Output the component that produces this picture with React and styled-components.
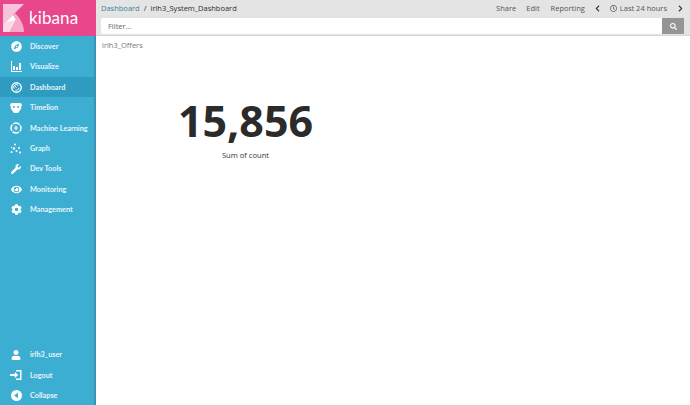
import React from "react";
import styled, { createGlobalStyle } from "styled-components";
import { FaCompass, FaWrench, FaEye, FaCog, FaUser, FaSearch, FaChevronLeft, FaChevronRight } from "react-icons/fa";
import { FaRegClock } from "react-icons/fa";

const Global = createGlobalStyle`
  html, body { margin: 0; padding: 0; width: 690px; height: 405px; overflow: hidden; background: #fff; }
  * { box-sizing: border-box; }
  body { font-family: "Open Sans", "Liberation Sans", sans-serif; -webkit-font-smoothing: antialiased; }
`;

const Page = styled.div`
  display: flex;
  width: 690px;
  height: 405px;
`;
const Sidebar = styled.aside`
  width: 96px;
  flex: none;
  display: flex;
  flex-direction: column;
  background: #3caed2;
  border-right: 2px solid #3a93b4;
`;
const Brand = styled.div`
  height: 36px;
  flex: none;
  display: flex;
  align-items: center;
  gap: 5px;
  padding-left: 3px;
  margin-right: -2px;
  background: #e8488b;
`;
const BrandName = styled.span`
  font-family: Lato, sans-serif;
  font-size: 17px;
  letter-spacing: 0.1px;
  color: #fff;
  line-height: 1;
  margin-top: -1px;
`;
const Nav = styled.nav`
  display: flex;
  flex-direction: column;
`;
const NavFoot = styled(Nav)`
  margin-top: auto;
  margin-bottom: -0.4px;
`;
const Item = styled.div`
  height: 20.4px;
  display: flex;
  align-items: center;
  font-family: Lato, sans-serif;
  font-size: 7.3px;
  font-weight: 700;
  color: #e6f5fa;
  padding-top: 0.6px;
  background: ${(p) => (p.$active ? "#2f9bc0" : "transparent")};
`;
const IconSlot = styled.span`
  width: 30px;
  padding-left: 2px;
  flex: none;
  display: flex;
  justify-content: center;
  color: #fff;
`;
const Main = styled.main`
  flex: 1;
  min-width: 0;
  display: flex;
  flex-direction: column;
`;
const TopBar = styled.header`
  height: 36px;
  flex: none;
  background: #e4e4e4;
  padding: 0 6px 0 5px;
  display: flex;
  flex-direction: column;
  border-bottom: 1px solid #d6d6d6;
`;
const TopRow = styled.div`
  height: 16px;
  margin: 0 0 2px 0;
  flex: none;
  display: flex;
  align-items: center;
  justify-content: space-between;
  font-size: 7.5px;
  color: #2d2d2d;
`;
const Crumbs = styled.div`
  display: flex;
  gap: 4px;
`;
const CrumbLink = styled.span`
  color: #3a7f9f;
`;
const Menu = styled.div`
  display: flex;
  align-items: center;
  color: #555;
`;
const MenuItem = styled.span`
  margin-left: ${(p) => p.$gap || 0}px;
  display: inline-flex;
  align-items: center;
  gap: 3px;
  color: ${(p) => (p.$dark ? "#333" : "#555")};
`;
const FilterRow = styled.div`
  display: flex;
  height: 16px;
`;
const FilterInput = styled.div`
  flex: 1;
  background: #fff;
  border-radius: 2px 0 0 2px;
  font-size: 7.5px;
  color: #666;
  padding-left: 7px;
  line-height: 16px;
`;
const SearchButton = styled.div`
  width: 22px;
  background: #959595;
  color: #fff;
  display: flex;
  align-items: center;
  justify-content: center;
`;
const PanelTitle = styled.div`
  font-size: 7.5px;
  color: #777;
  padding: 4px 0 0 6px;
  line-height: 11px;
`;
const Metric = styled.div`
  width: 299px;
  margin-top: 45px;
  display: flex;
  flex-direction: column;
  align-items: center;
`;
const MetricValue = styled.div`
  font-size: 43px;
  font-weight: 700;
  line-height: 50px;
  color: #2b2b2b;
`;
const MetricLabel = styled.div`
  font-size: 7.6px;
  color: #333;
  line-height: 12px;
  margin-top: 3px;
`;

const KibanaLogo = () => (
  <svg width="21" height="28" viewBox="0 0 21 28">
    <path d="M0 0H21L0 21Z" fill="#f8c3da" />
    <path d="M0 21 10 11 13 16 7 28H0Z" fill="#fbd9e8" />
    <path d="M10 11 12 9C17 14 21 21 21 28H7L13 16Z" fill="#f5a9cb" />
    <path d="M0 21 10 11 13 16 4 18Z" fill="#fff" />
  </svg>
);
const VisualizeIcon = () => (
  <svg width="11" height="11" viewBox="0 0 11 11" fill="#fff">
    <path d="M0 0h1v10h10v1H0z" />
    <path d="M2 5h2v4H2zM5 6h2v3H5zM8 2h2v7H8z" />
  </svg>
);
const DashboardIcon = () => (
  <svg width="11" height="11" viewBox="0 0 11 11" fill="none" stroke="#fff">
    <circle cx="5.500" cy="5.500" r="4.700" strokeWidth="1.400" />
    <path d="M5.500 5.500 3 3.500M3 6.500A2.600 2.600 0 0 1 7.500 3.800M4.500 8A2.600 2.600 0 0 0 8 6" strokeWidth="1" />
  </svg>
);
const TimelionIcon = () => (
  <svg width="12" height="10" viewBox="0 0 12 10" fill="#fff">
    <path d="M0 1 2 0h8l2 1-1 5-3 4H4L1 6z" />
    <circle cx="4" cy="4" r="1" fill="#3caed2" />
    <circle cx="8" cy="4" r="1" fill="#3caed2" />
  </svg>
);
const MlIcon = () => (
  <svg width="12" height="12" viewBox="0 0 12 12" fill="none" stroke="#fff" strokeWidth="1.500">
    <circle cx="6" cy="6" r="5" strokeDasharray="6.850 1" strokeDashoffset="3.400" />
    <path d="M6 3.500v5M4 6h4" strokeWidth="1" />
  </svg>
);
const GraphIcon = () => (
  <svg width="12" height="11" viewBox="0 0 12 11" fill="#fff">
    <circle cx="5" cy="1.500" r="1" />
    <circle cx="9" cy="5" r="1" />
    <circle cx="4" cy="5.500" r="1.200" />
    <circle cx="1.500" cy="9" r="1" />
    <circle cx="6.500" cy="8" r="1" />
    <circle cx="10" cy="9.500" r="1" />
    <circle cx="1.500" cy="4.500" r=".7" />
  </svg>
);
const CollapseIcon = () => (
  <svg width="11" height="11" viewBox="0 0 11 11">
    <circle cx="5.500" cy="5.500" r="5.500" fill="#fff" />
    <path d="M3 5.500 7 2.800V8.200Z" fill="#3caed2" />
  </svg>
);
const LogoutIcon = () => (
  <svg width="12" height="10" viewBox="0 0 12 10" fill="none" stroke="#fff">
    <path d="M6 .7h4.800v8.600H6" strokeWidth="1.400" />
    <path d="M0 5h6" strokeWidth="2" />
    <path d="M5 2.500 8 5 5 7.500Z" fill="#fff" strokeWidth=".5" />
  </svg>
);

const topItems = [
  ["Discover", <FaCompass size={11} />],
  ["Visualize", <VisualizeIcon />],
  ["Dashboard", <DashboardIcon />, true],
  ["Timelion", <TimelionIcon />],
  ["Machine Learning", <MlIcon />],
  ["Graph", <GraphIcon />],
  ["Dev Tools", <FaWrench size={10} />],
  ["Monitoring", <FaEye size={11} />],
  ["Management", <FaCog size={11} />],
];
const bottomItems = [
  ["irlh3_user", <FaUser size={10} />],
  ["Logout", <LogoutIcon />],
  ["Collapse", <CollapseIcon />],
];

const NavItem = ({ label, icon, active }) => (
  <Item $active={active}>
    <IconSlot>{icon}</IconSlot>
    {label}
  </Item>
);

export default function App() {
  return (
    <Page>
      <Global />
      <Sidebar>
        <Brand>
          <KibanaLogo />
          <BrandName>kibana</BrandName>
        </Brand>
        <Nav>
          {topItems.map(([l, i, a]) => <NavItem key={l} label={l} icon={i} active={a} />)}
        </Nav>
        <NavFoot>
          {bottomItems.map(([l, i]) => <NavItem key={l} label={l} icon={i} />)}
        </NavFoot>
      </Sidebar>
      <Main>
        <TopBar>
          <TopRow>
            <Crumbs>
              <CrumbLink>Dashboard</CrumbLink>
              <span>/</span>
              <span>irlh3_System_Dashboard</span>
            </Crumbs>
            <Menu>
              <MenuItem>Share</MenuItem>
              <MenuItem $gap={10}>Edit</MenuItem>
              <MenuItem $gap={11}>Reporting</MenuItem>
              <MenuItem $gap={9} $dark><FaChevronLeft size={7} /></MenuItem>
              <MenuItem $gap={9}><FaRegClock size={7} />Last 24 hours</MenuItem>
              <MenuItem $gap={10} $dark><FaChevronRight size={7} /></MenuItem>
            </Menu>
          </TopRow>
          <FilterRow>
            <FilterInput>Filter...</FilterInput>
            <SearchButton><FaSearch size={7} /></SearchButton>
          </FilterRow>
        </TopBar>
        <PanelTitle>irlh3_Offers</PanelTitle>
        <Metric>
          <MetricValue>15,856</MetricValue>
          <MetricLabel>Sum of count</MetricLabel>
        </Metric>
      </Main>
    </Page>
  );
}
